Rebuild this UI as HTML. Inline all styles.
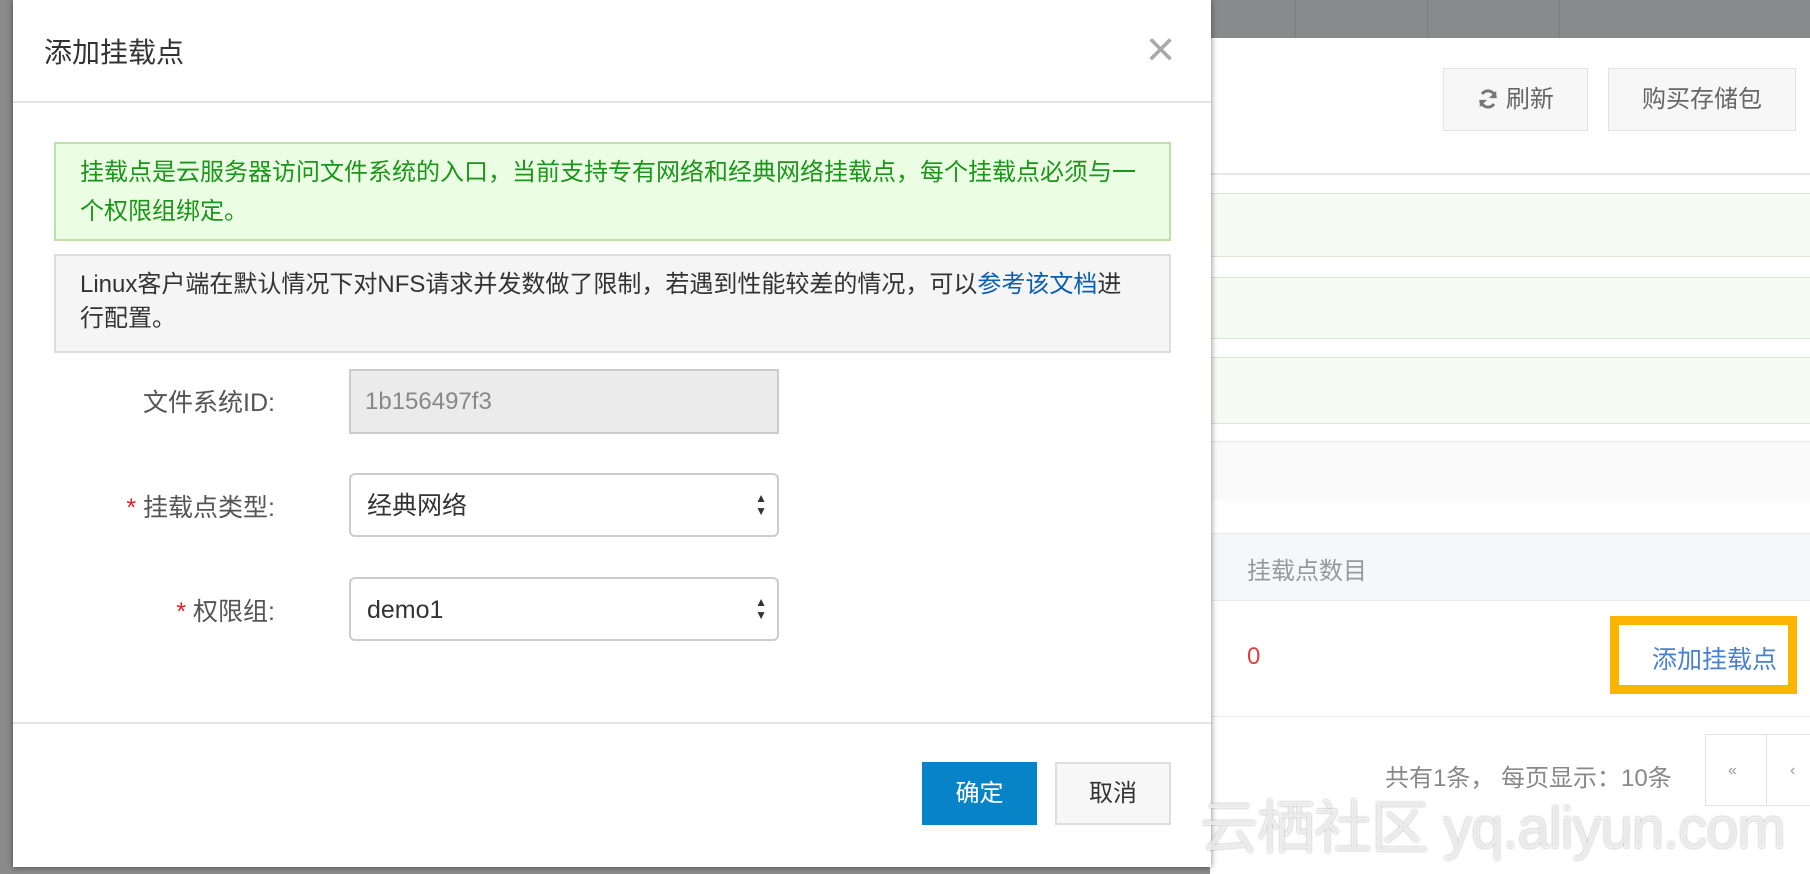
<!DOCTYPE html>
<html><head><meta charset="utf-8"><style>
*{box-sizing:border-box;margin:0;padding:0}
body{width:1810px;height:874px;position:relative;overflow:hidden;background:#fff;font-family:"Liberation Sans","Noto Sans CJK SC",sans-serif;color:#333}
.a{position:absolute}
</style></head><body>
<div class="a" style="left:0;top:0;width:1810px;height:38px;background:#888a8c"></div>
<div class="a" style="left:1295px;top:0;width:1px;height:38px;background:#7c7e80"></div>
<div class="a" style="left:1427px;top:0;width:1px;height:38px;background:#7c7e80"></div>
<div class="a" style="left:1559px;top:0;width:1px;height:38px;background:#7c7e80"></div>
<div class="a" style="left:1443px;top:68px;width:145px;height:63px;background:#f7f7f7;border:1px solid #e3e3e3;font-size:24px;color:#666;line-height:61px;text-align:center"><svg width="22" height="22" viewBox="0 0 24 24" style="vertical-align:-3px"><path d="M20 11A8 8 0 0 0 5.5 6.5M4 13a8 8 0 0 0 14.5 4.5" fill="none" stroke="#777" stroke-width="3.2"/><path d="M21 3v8h-8z M3 21v-8h8z" fill="#777"/></svg> 刷新</div>
<div class="a" style="left:1608px;top:68px;width:188px;height:63px;background:#f7f7f7;border:1px solid #e3e3e3;font-size:24px;color:#666;line-height:61px;text-align:center">购买存储包</div>
<div class="a" style="left:1210px;top:173px;width:600px;height:2px;background:#e8e8e8"></div>
<div class="a" style="left:1210px;top:193px;width:600px;height:64px;background:#f6fcf2;border-top:1px solid #dbe8d4;border-bottom:1px solid #dbe8d4"></div>
<div class="a" style="left:1210px;top:277px;width:600px;height:62px;background:#f6fcf2;border-top:1px solid #dbe8d4;border-bottom:1px solid #dbe8d4"></div>
<div class="a" style="left:1210px;top:357px;width:600px;height:67px;background:#f6fcf2;border-top:1px solid #dbe8d4;border-bottom:1px solid #dbe8d4"></div>
<div class="a" style="left:1210px;top:441px;width:600px;height:60px;background:#fafafa;border-top:1px solid #e8e8e8"></div>
<div class="a" style="left:1210px;top:533px;width:600px;height:68px;background:#f5f7fa;border-top:1px solid #e8ebf0;border-bottom:1px solid #e8ebf0"></div>
<div class="a" style="left:1247px;top:551px;font-size:24px;color:#999">挂载点数目</div>
<div class="a" style="left:1247px;top:643px;font-size:24px;color:#e04040">0</div>
<div class="a" style="left:1610px;top:616px;width:187px;height:78px;border:9px solid #fbb400;background:#fff"></div>
<div class="a" style="left:1652px;top:640px;font-size:25px;color:#4a80d0">添加挂载点</div>
<div class="a" style="left:1210px;top:716px;width:600px;height:1px;background:#e8e8e8"></div>
<div class="a" style="left:1385px;top:758px;font-size:24px;color:#888">共有1条， 每页显示：10条</div>
<div class="a" style="left:1705px;top:734px;width:110px;height:72px;border:1px solid #e3e3e3"></div>
<div class="a" style="left:1766px;top:734px;width:1px;height:72px;background:#e3e3e3"></div>
<div class="a" style="left:1728px;top:762px;font-size:16px;color:#999">«</div>
<div class="a" style="left:1790px;top:762px;font-size:16px;color:#999">‹</div>
<div class="a" style="left:0;top:0;width:14px;height:874px;background:#8b8b8b"></div>
<div class="a" style="left:0;top:866px;width:1210px;height:8px;background:#8b8b8b"></div>
<div class="a" style="left:13px;top:0;width:1198px;height:867px;background:#fff;box-shadow:0 0 6px rgba(0,0,0,.5)">
  <div class="a" style="left:31px;top:31px;font-size:28px;color:#333">添加挂载点</div>
  <div class="a" style="left:1133px;top:24px;font-size:50px;color:#aaa;line-height:50px">×</div>
  <div class="a" style="left:0;top:101px;width:1198px;height:2px;background:#e3e3e3"></div>
  <div class="a" style="left:41px;top:142px;width:1117px;height:99px;background:#ebfde2;border:2px solid #bfe0ab;padding:9px 0 0 24px;font-size:24px;line-height:39px;color:#1a961a;white-space:nowrap">挂载点是云服务器访问文件系统的入口，当前支持专有网络和经典网络挂载点，每个挂载点必须与一<br>个权限组绑定。</div>
  <div class="a" style="left:41px;top:254px;width:1117px;height:99px;background:#f5f5f5;border:2px solid #ddd;padding:12px 0 0 24px;font-size:24px;line-height:34px;color:#333;white-space:nowrap">Linux客户端在默认情况下对NFS请求并发数做了限制，若遇到性能较差的情况，可以<span style="color:#0a5fb4">参考该文档</span>进<br>行配置。</div>
  <div class="a" style="left:40px;top:383px;width:222px;text-align:right;font-size:25px;color:#555">文件系统ID:</div>
  <div class="a" style="left:336px;top:369px;width:430px;height:65px;background:#ebebeb;border:2px solid #ccc;padding-left:14px;line-height:61px;font-size:24px;color:#888">1b156497f3</div>
  <div class="a" style="left:40px;top:488px;width:222px;text-align:right;font-size:25px;color:#555"><span style="color:#e02020">*</span> 挂载点类型:</div>
  <div class="a" style="left:336px;top:473px;width:430px;height:64px;background:#fff;border:2px solid #ccc;border-radius:6px;padding-left:16px;line-height:62px;font-size:25px;color:#333">经典网络<span style="position:absolute;right:10px;top:0;font-size:12px;line-height:13px;padding-top:17px">▲<br>▼</span></div>
  <div class="a" style="left:40px;top:592px;width:222px;text-align:right;font-size:25px;color:#555"><span style="color:#e02020">*</span> 权限组:</div>
  <div class="a" style="left:336px;top:577px;width:430px;height:64px;background:#fff;border:2px solid #ccc;border-radius:6px;padding-left:16px;line-height:62px;font-size:25px;color:#333">demo1<span style="position:absolute;right:10px;top:0;font-size:12px;line-height:13px;padding-top:17px">▲<br>▼</span></div>
  <div class="a" style="left:0;top:722px;width:1198px;height:2px;background:#e3e3e3"></div>
  <div class="a" style="left:909px;top:762px;width:115px;height:63px;background:#0784c7;color:#fff;font-size:24px;line-height:63px;text-align:center">确定</div>
  <div class="a" style="left:1042px;top:762px;width:116px;height:63px;background:#f7f7f7;border:2px solid #ddd;color:#333;font-size:24px;line-height:59px;text-align:center">取消</div>
</div>
<div class="a" style="left:1200px;top:794px;font-size:58px;line-height:70px;color:rgba(255,255,255,.75);text-shadow:0 0 2px rgba(0,0,0,.35);white-space:nowrap;letter-spacing:-1px">云栖社区 yq.aliyun.com</div>
</body></html>
